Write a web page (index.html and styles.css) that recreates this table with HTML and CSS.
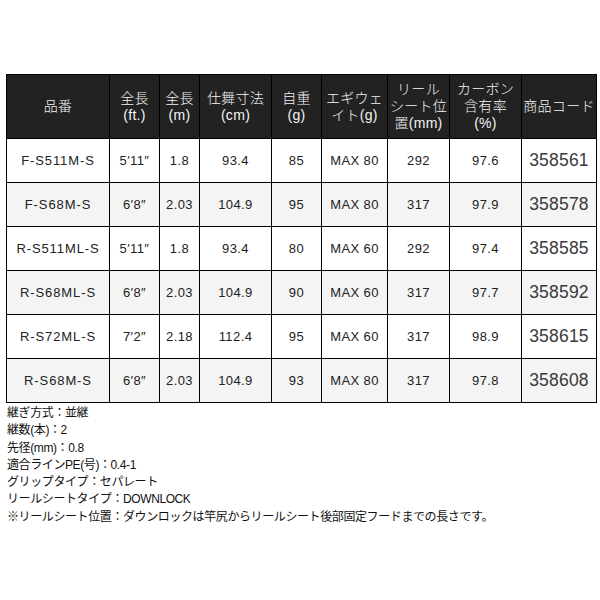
FILE: index.html
```html
<!DOCTYPE html>
<html lang="ja">
<head>
<meta charset="utf-8">
<link rel="stylesheet" href="styles.css">
</head>
<body>
<div class="page">
  <table class="spec">
    <colgroup>
      <col class="c1"><col class="c2"><col class="c3"><col class="c4"><col class="c5"><col class="c6"><col class="c7"><col class="c8"><col class="c9">
    </colgroup>
    <thead>
      <tr>
        <th>品番</th>
        <th>全長<br>(ft.)</th>
        <th>全長<br>(m)</th>
        <th>仕舞寸法<br>(cm)</th>
        <th>自重<br>(g)</th>
        <th>エギウェ<br>イト(g)</th>
        <th>リール<br>シート位<br>置(mm)</th>
        <th>カーボン<br>含有率<br>(%)</th>
        <th>商品コード</th>
      </tr>
    </thead>
    <tbody>
      <tr><td class="model">F-S511M-S</td><td>5′11″</td><td>1.8</td><td>93.4</td><td>85</td><td>MAX 80</td><td>292</td><td>97.6</td><td class="code">358561</td></tr>
      <tr><td class="model">F-S68M-S</td><td>6′8″</td><td>2.03</td><td>104.9</td><td>95</td><td>MAX 80</td><td>317</td><td>97.9</td><td class="code">358578</td></tr>
      <tr><td class="model">R-S511ML-S</td><td>5′11″</td><td>1.8</td><td>93.4</td><td>80</td><td>MAX 60</td><td>292</td><td>97.4</td><td class="code">358585</td></tr>
      <tr><td class="model">R-S68ML-S</td><td>6′8″</td><td>2.03</td><td>104.9</td><td>90</td><td>MAX 60</td><td>317</td><td>97.7</td><td class="code">358592</td></tr>
      <tr><td class="model">R-S72ML-S</td><td>7′2″</td><td>2.18</td><td>112.4</td><td>95</td><td>MAX 60</td><td>317</td><td>98.9</td><td class="code">358615</td></tr>
      <tr><td class="model">R-S68M-S</td><td>6′8″</td><td>2.03</td><td>104.9</td><td>93</td><td>MAX 80</td><td>317</td><td>97.8</td><td class="code">358608</td></tr>
    </tbody>
  </table>
  <div class="notes">
    <p>継ぎ方式：並継</p>
    <p>継数(本)：2</p>
    <p>先径(mm)：0.8</p>
    <p>適合ラインPE(号)：0.4-1</p>
    <p>グリップタイプ：セパレート</p>
    <p>リールシートタイプ：DOWNLOCK</p>
    <p>※リールシート位置：ダウンロックは竿尻からリールシート後部固定フードまでの長さです。</p>
  </div>
</div>
</body>
</html>
```

FILE: styles.css
```css
html, body {
  margin: 0;
  padding: 0;
  background: #fff;
}
body {
  font-family: "Liberation Sans", "Noto Sans CJK JP", sans-serif;
  color: #1a1a1a;
}
.page {
  padding: 74px 0 0 6px;
}
.spec {
  border-collapse: collapse;
  table-layout: fixed;
  width: 590px;
  border: 1px solid #000;
}
.c1 { width: 103px; }
.c2 { width: 50px; }
.c3 { width: 40px; }
.c4 { width: 72px; }
.c5 { width: 50px; }
.c6 { width: 66px; }
.c7 { width: 62px; }
.c8 { width: 72px; }
.c9 { width: 75px; }
.spec th {
  background: #222;
  color: #f4f4f4;
  font-weight: 300;
  font-size: 14px;
  line-height: 16.7px;
  height: 63px;
  padding: 0;
  border: 1px solid #000;
  text-align: center;
  vertical-align: middle;
  font-family: "Liberation Sans", "Noto Sans CJK JP", sans-serif;
  letter-spacing: 0.3px;
}
.spec td {
  height: 43px;
  padding: 0;
  border: 1px solid #000;
  text-align: center;
  vertical-align: middle;
  font-size: 13px;
  letter-spacing: 0.4px;
  color: #222;
}
.spec td.model {
  letter-spacing: 0.9px;
}
.spec tbody tr:nth-child(even) td {
  background: #f4f4f4;
}
.spec td.code {
  font-size: 17.5px;
  letter-spacing: 0.2px;
  color: #3a3a3a;
}
.notes {
  margin-top: 2px;
  padding-left: 1px;
}
.notes p {
  margin: 0;
  font-size: 12px;
  line-height: 17.3px;
  letter-spacing: -0.4px;
  color: #111;
}
```
